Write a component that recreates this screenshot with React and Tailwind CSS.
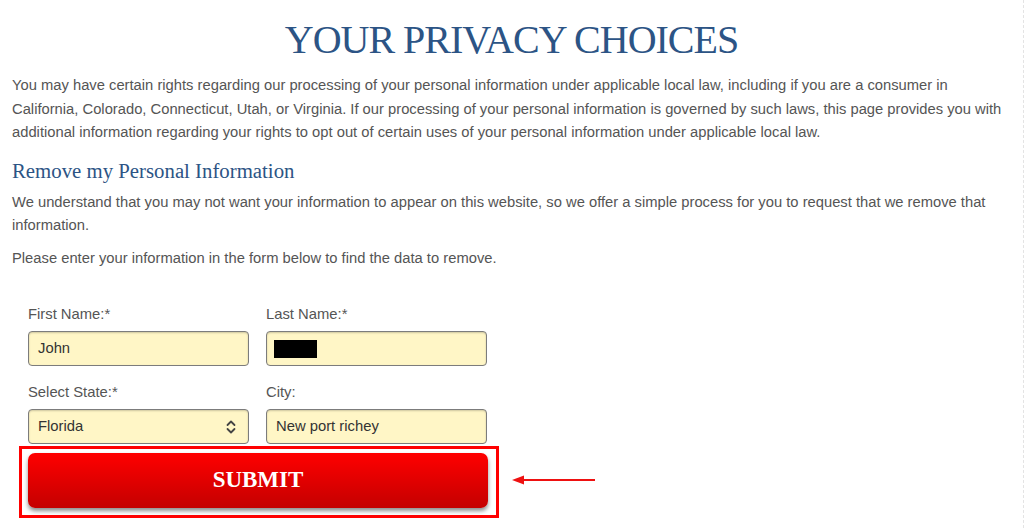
import React from "react";

const serif = { fontFamily: '"Liberation Serif", "Times New Roman", serif' };

function Field({ label, children }) {
  return (
    <div className="flex flex-col w-[221px]">
      <div className="text-[14.8px] leading-[20px] text-[#555555]">{label}</div>
      <div className="mt-[7px] h-[35px] rounded-[4px] border border-[#7c7c7c] bg-[#fff6c6] shadow-[inset_0_1px_2px_rgba(0,0,0,0.2)] flex items-center px-[9px] text-[14.8px] text-[#333333]">
        {children}
      </div>
    </div>
  );
}

export default function App() {
  return (
    <div
      className="w-[1024px] h-[528px] bg-white overflow-hidden px-3 border-r border-dashed border-[#e4e4e4]"
      style={{ fontFamily: '"Liberation Sans", Arial, sans-serif' }}
    >
      <h1
        className="pt-[16px] text-center text-[40px] leading-[48px] tracking-[-1px] text-[#2c5485] font-normal"
        style={serif}
      >
        YOUR PRIVACY CHOICES
      </h1>
      <p className="mt-[10px] text-[14.75px] leading-[23.5px] text-[#555555]">
        You may have certain rights regarding our processing of your personal information under applicable local law, including if you are a consumer in
        <br />
        California, Colorado, Connecticut, Utah, or Virginia. If our processing of your personal information is governed by such laws, this page provides you with
        <br />
        additional information regarding your rights to opt out of certain uses of your personal information under applicable local law.
      </p>
      <h2 className="mt-[12px] text-[20.8px] leading-[28px] text-[#2c5485] font-normal" style={serif}>
        Remove my Personal Information
      </h2>
      <p className="mt-[6px] text-[14.75px] leading-[23.5px] text-[#555555]">
        We understand that you may not want your information to appear on this website, so we offer a simple process for you to request that we remove that
        <br />
        information.
      </p>
      <p className="mt-[9px] text-[14.75px] leading-[23.5px] text-[#555555]">
        Please enter your information in the form below to find the data to remove.
      </p>

      <div className="mt-[34px] ml-[7px]">
        <div className="flex gap-[17px] pl-[9px]">
          <Field label="First Name:*">John</Field>
          <Field label="Last Name:*">
            <span className="block w-[43px] h-[18px] bg-black -ml-[2px]" />
          </Field>
        </div>
        <div className="flex gap-[17px] pl-[9px] mt-[16px]">
          <Field label="Select State:*">
            <span className="flex-1">Florida</span>
            <svg width="10" height="18" viewBox="0 0 10 18" className="mr-[3px]">
              <path d="M1.5 7 L5 3.5 L8.5 7" fill="none" stroke="#444" strokeWidth="1.8" strokeLinecap="round" strokeLinejoin="round" />
              <path d="M1.5 11 L5 14.5 L8.5 11" fill="none" stroke="#444" strokeWidth="1.8" strokeLinecap="round" strokeLinejoin="round" />
            </svg>
          </Field>
          <Field label="City:">New port richey</Field>
        </div>

        <div className="flex items-center gap-[13px] mt-[2px]">
          <div className="w-[480px] h-[72px] border-[3px] border-[#ff0000] pl-[6px] pr-[8px] pt-[4px]">
            <div
              className="h-[55px] rounded-[7px] bg-gradient-to-b from-[#ff0000] to-[#c40000] shadow-[0_3px_4px_rgba(0,0,0,0.45)] flex items-center justify-center text-white text-[23px] font-bold"
              style={serif}
            >
              SUBMIT
            </div>
          </div>
          <svg width="84" height="12" viewBox="0 0 84 12" className="mb-[4px]">
            <line x1="8" y1="6" x2="83" y2="6" stroke="#ee1111" strokeWidth="2" />
            <path d="M0 6 L12 1.5 L12 10.5 Z" fill="#ee1111" />
          </svg>
        </div>
      </div>
    </div>
  );
}
